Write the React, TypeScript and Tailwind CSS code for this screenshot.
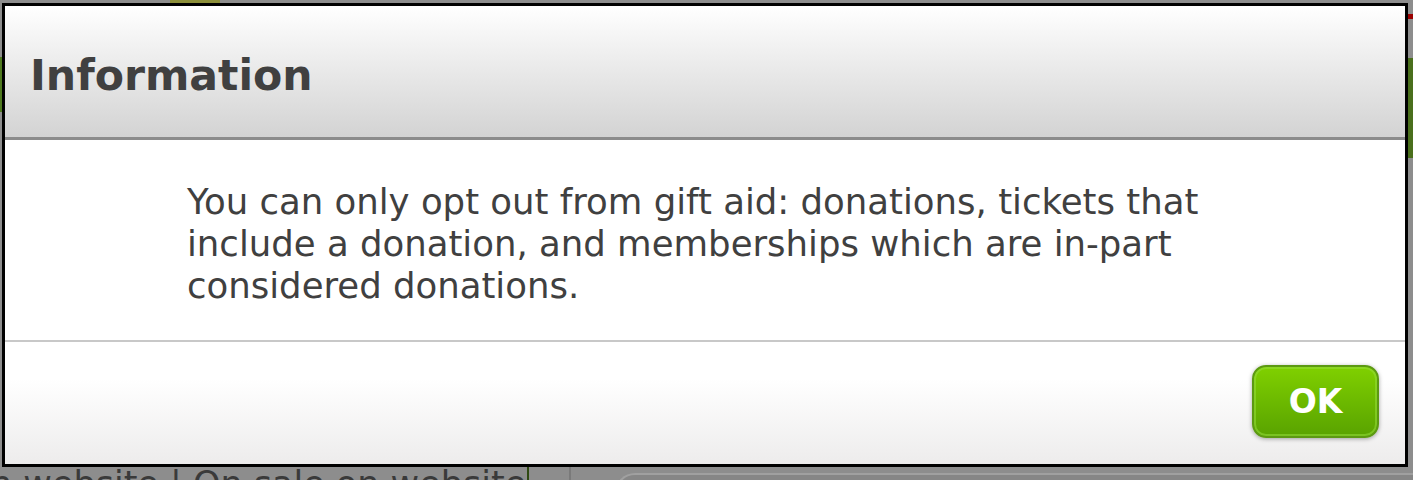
import React from 'react';

const font = { fontFamily: '"DejaVu Sans", Verdana, sans-serif' };

const InfoDialog = ({ onClose }: { onClose?: () => void }) => {
  return (
    <div
      className="absolute left-[2px] top-[3px] w-[1406px] h-[464px] border-[3px] border-black bg-white flex flex-col"
      style={font}
    >
      {/* Header */}
      <div className="h-[134px] shrink-0 border-b-[3px] border-[#8c8c8c] bg-gradient-to-b from-white to-[#d3d3d3] pl-[25px] pt-[44px]">
        <h2 className="text-[42.6px] leading-[50px] font-bold text-[#404040]">Information</h2>
      </div>

      {/* Body */}
      <div className="h-[202px] shrink-0 border-b-2 border-[#c8c8c8] pl-[182px] pt-[41px]">
        <p className="w-[1070px] text-[35.5px] leading-[42px] text-[#404040]">
          You can only opt out from gift aid: donations, tickets that include a donation, and
          memberships which are in-part considered donations.
        </p>
      </div>

      {/* Footer */}
      <div className="flex-1 flex justify-end items-start pt-[23px] pr-[26px] bg-gradient-to-b from-white from-[30%] to-[#edecec]">
        <button
          onClick={onClose}
          className="w-[127px] h-[73px] rounded-[14px] border-2 border-[#5c9912] bg-gradient-to-b from-[#80d000] to-[#59a300] shadow-[0_1px_4px_rgba(0,0,0,0.35),inset_0_0_0_2px_rgba(150,220,60,0.55)] text-white text-[33px] font-bold leading-none flex items-center justify-center"
        >
          OK
        </button>
      </div>
    </div>
  );
};

export default function App() {
  return (
    <div className="relative w-full h-[480px] overflow-hidden bg-[#8d8d8d]" style={font}>
      {/* dimmed page behind the dialog */}
      <div className="absolute left-0 top-[57px] w-[2px] h-[55px] bg-[#4f7a1f]" />
      <div className="absolute right-0 top-[14px] w-[5px] h-[5px] bg-[#9a0000]" />
      <div className="absolute right-0 top-[58px] w-[5px] h-[100px] bg-[#4a6f1c]" />
      <div className="absolute left-[170px] top-0 w-[50px] h-[3px] bg-[#8c8f3a]" />

      <div className="absolute left-0 top-[463px] flex items-start">
        <div className="-ml-[10px] text-[35px] leading-[42px] text-[#3a3a3a] whitespace-nowrap pr-[1px] border-r-2 border-[#2f4a12]">
          n website | On sale on website
        </div>
        <div className="ml-[40px] h-[30px] border-l-2 border-[#7a7a7a]" />
        <div className="ml-[44px] mt-[10px] w-[800px] h-[30px] rounded-tl-[20px] border-t-2 border-l-2 border-[#a0a0a0] bg-[#868686]" />
      </div>

      <InfoDialog />
    </div>
  );
}
